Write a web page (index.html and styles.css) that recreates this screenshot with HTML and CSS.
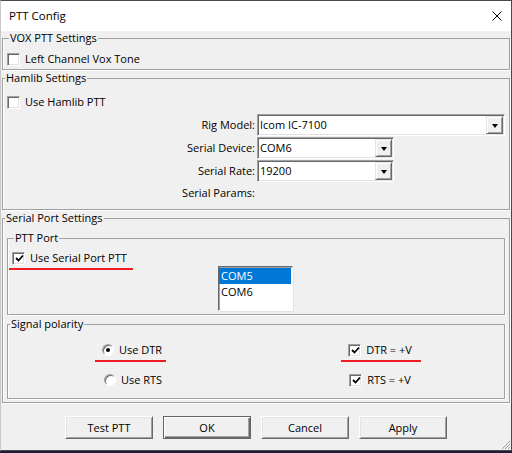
FILE: index.html
```html
<!DOCTYPE html>
<html lang="en">
<head>
  <meta charset="UTF-8"/>
  <title>PTT Config</title>
  <link rel="stylesheet" href="styles.css">
</head>
<body>
  <div class="window">
    <!-- Title bar -->
    <div class="titlebar">
      <span>PTT Config</span>
      <svg class="close" width="10" height="10" viewBox="0 0 10 10">
        <path d="M0.5 0.5 L9.5 9.5 M9.5 0.5 L0.5 9.5" stroke="#000" stroke-width="1"/>
      </svg>
    </div>

    <!-- VOX -->
    <fieldset class="group vox">
      <legend>VOX PTT Settings</legend>
      <label class="row"><span class="check"></span>Left Channel Vox Tone</label>
    </fieldset>

    <!-- Hamlib -->
    <fieldset class="group hamlib">
      <legend>Hamlib Settings</legend>
      <label class="row"><span class="check"></span>Use Hamlib PTT</label>
      <div class="form">
        <span class="lbl">Rig Model:</span>
        <div class="combo wide"><span>Icom IC-7100</span><span class="drop"><i></i></span></div>
        <span class="lbl">Serial Device:</span>
        <div class="combo"><span>COM6</span><span class="drop"><i></i></span></div>
        <span class="lbl">Serial Rate:</span>
        <div class="combo"><span>19200</span><span class="drop"><i></i></span></div>
        <span class="lbl params">Serial Params:</span>
        <span></span>
      </div>
    </fieldset>

    <!-- Serial port -->
    <fieldset class="group serial">
      <legend>Serial Port Settings</legend>

      <fieldset class="group inner port">
        <legend>PTT Port</legend>
        <label class="row"><span class="mark mark-ptt"><span class="check on"><svg width="9" height="9" viewBox="0 0 9 9"><path d="M1 4 L3.5 6.5 L8 1.5" fill="none" stroke="#000" stroke-width="1.8"/></svg></span>Use Serial Port PTT</span></label>
        <ul class="listbox">
          <li class="sel">COM5</li>
          <li>COM6</li>
        </ul>
      </fieldset>

      <fieldset class="group inner polarity">
        <legend>Signal polarity</legend>
        <div class="pol-grid">
          <label class="row mark"><span class="radio on"><i></i></span>Use DTR</label>
          <label class="row mark mark-wide"><span class="check on"><svg width="9" height="9" viewBox="0 0 9 9"><path d="M1 4 L3.5 6.5 L8 1.5" fill="none" stroke="#000" stroke-width="1.8"/></svg></span>DTR = +V</label>
          <label class="row shift"><span class="radio"></span>Use RTS</label>
          <label class="row"><span class="check on"><svg width="9" height="9" viewBox="0 0 9 9"><path d="M1 4 L3.5 6.5 L8 1.5" fill="none" stroke="#000" stroke-width="1.8"/></svg></span>RTS = +V</label>
        </div>
      </fieldset>
    </fieldset>

    <!-- Dialog buttons -->
    <div class="buttons">
      <button class="btn">Test PTT</button>
      <button class="btn default">OK</button>
      <button class="btn">Cancel</button>
      <button class="btn">Apply</button>
    </div>

    <!-- Size grip in the corner -->
    <svg class="grip" width="11" height="11" viewBox="0 0 11 11">
      <path d="M10 2 L2 10 M10 5 L5 10 M10 8 L8 10" stroke="#a0a0a0" stroke-width="1"/>
    </svg>
  </div>
</body>
</html>
```

FILE: styles.css
```css
/* Classic Win32 dialog colours */
:root {
  --face: #f0f0f0;
  --shadow: #a0a0a0;
  --dark: #696969;
  --light: #e3e3e3;
  --select: #0078d7;
  --mark: #ec1c24;
  --ui-font: "Open Sans", "Liberation Sans", Arial, sans-serif;
}

* {
  box-sizing: border-box;
}

html, body {
  margin: 0;
}

body {
  background: #1b1d3a;
  font: 11px/14px var(--ui-font);
  color: #000;
}

/* Dialog frame */
.window {
  position: relative;
  width: 512px;
  height: 451px;
  background: var(--face);
  border: 1px solid #4a4a4a;
  border-left-color: #c8c8c8;
  display: flex;
  flex-direction: column;
}

.titlebar {
  height: 30px;
  background: #fff;
  display: flex;
  align-items: center;
  justify-content: space-between;
  padding: 0 9px 0 8px;
  font-size: 11.5px;
}

/* Etched group boxes */
.group {
  margin: 0 1px;
  padding: 0 0 0 4px;
  border: 1px solid var(--shadow);
  box-shadow: 1px 1px 0 #fff, inset 1px 0 0 #fff;
  min-width: 0;
}

.group legend {
  margin-left: 2px;
  padding: 0 1px;
  line-height: 14px;
}

.group + .group {
  margin-top: 1px;
}

.vox {
  padding-bottom: 3px;
}

.vox .row {
  margin-top: 7px;
}

/* Checkbox / radio rows */
.row {
  display: flex;
  align-items: center;
  gap: 5px;
  height: 14px;
}

.check {
  width: 13px;
  height: 13px;
  flex-shrink: 0;
  background: #fff;
  border: 1px solid;
  border-color: var(--shadow) #fff #fff var(--shadow);
  box-shadow: inset 1px 1px 0 var(--dark), inset -1px -1px 0 var(--light);
  display: flex;
  align-items: center;
  justify-content: center;
}

.check svg {
  margin: 1px 0 0 1px;
}

.radio {
  width: 12px;
  height: 12px;
  flex-shrink: 0;
  border-radius: 50%;
  background: #fff;
  border: 1px solid;
  border-color: var(--shadow) #fff #fff var(--shadow);
  box-shadow: inset 1px 1px 0 var(--dark);
  display: flex;
  align-items: center;
  justify-content: center;
}

.radio i {
  width: 4px;
  height: 4px;
  border-radius: 50%;
  background: #000;
}

/* Hamlib form */
.hamlib {
  padding-left: 0;
  padding-bottom: 6px;
}

.hamlib .row {
  margin: 10px 0 0 4px;
}

.form {
  display: grid;
  grid-template-columns: 252px auto;
  column-gap: 2px;
  row-gap: 1px;
  margin-top: 5px;
  align-items: center;
}

.lbl {
  text-align: right;
}

.params {
  height: 20px;
  line-height: 20px;
}

.combo {
  width: 137px;
  height: 22px;
  background: #fff;
  border: 1px solid;
  border-color: var(--shadow) #fff #fff var(--shadow);
  box-shadow: inset 1px 1px 0 var(--dark), inset -1px -1px 0 var(--light);
  display: flex;
  align-items: center;
  padding-left: 2px;
}

.combo.wide {
  width: 248px;
}

.drop {
  margin-left: auto;
  margin-right: 1px;
  width: 17px;
  height: 18px;
  background: var(--face);
  border: 1px solid;
  border-color: var(--light) var(--dark) var(--dark) var(--light);
  box-shadow: inset 1px 1px 0 #fff, inset -1px -1px 0 var(--shadow);
  display: flex;
  align-items: center;
  justify-content: center;
}

.drop i {
  width: 0;
  height: 0;
  border-left: 3.5px solid transparent;
  border-right: 3.5px solid transparent;
  border-top: 4px solid #000;
  margin-top: 1px;
}

/* Serial port groups */
.serial {
  padding: 0 0 3px 0;
}

.inner {
  margin: 6px 4px 0;
}

.port {
  padding-bottom: 3px;
}

.port .row {
  margin-top: 6px;
}

.listbox {
  list-style: none;
  margin: 1px 0 0 206px;
  padding: 1px 0 0;
  width: 75px;
  height: 45px;
  background: #fff;
  border: 1px solid;
  border-color: var(--dark) #fff #fff var(--dark);
  box-shadow: inset 1px 1px 0 var(--shadow), 1px 1px 0 var(--light);
}

.listbox li {
  height: 16px;
  line-height: 16px;
  padding-left: 2px;
  margin-right: 1px;
}

.listbox .sel {
  background: var(--select);
  color: #fff;
}

.inner + .inner {
  margin-top: 2px;
}

.polarity {
  padding: 0 0 11px 0;
}

.pol-grid {
  display: grid;
  grid-template-columns: 1fr 1fr;
  row-gap: 16px;
  justify-items: center;
  margin-top: 12px;
}

.pol-grid .shift {
  margin-left: 2px;
}

/* Red underline marks */
.mark {
  position: relative;
  display: flex;
  align-items: center;
  gap: 5px;
}

.mark::after {
  content: "";
  position: absolute;
  left: -7px;
  right: -4px;
  bottom: -5px;
  height: 2px;
  background: var(--mark);
}

.mark-ptt::after {
  left: -3px;
  right: -6px;
}

.mark-wide::after {
  right: -9px;
}

/* Dialog buttons */
.buttons {
  display: flex;
  justify-content: center;
  gap: 10px;
  margin-top: 13px;
}

.btn {
  width: 88px;
  height: 23px;
  padding: 0;
  font: 11px var(--ui-font);
  color: #000;
  background: var(--face);
  border: 1px solid;
  border-color: #fff var(--dark) var(--dark) #fff;
  box-shadow: inset 1px 1px 0 var(--light), inset -1px -1px 0 var(--shadow);
}

.btn.default {
  border-color: #646464;
  box-shadow: inset 1px 1px 0 #fff, inset -1px -1px 0 var(--dark), inset -2px -2px 0 var(--shadow);
}

.grip {
  position: absolute;
  right: 0;
  bottom: 0;
}
```
